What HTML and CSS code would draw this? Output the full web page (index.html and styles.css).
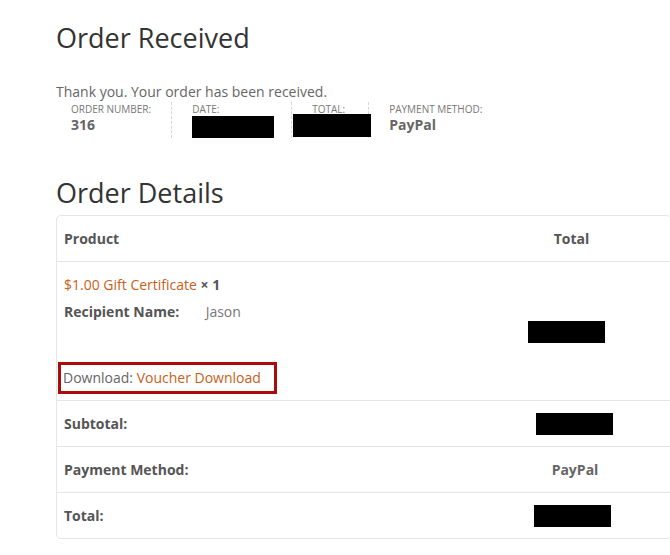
FILE: index.html
```html
<!DOCTYPE html>
<html lang="en">
<head>
    <meta charset="UTF-8">
    <meta name="viewport" content="width=device-width, initial-scale=1.0">
    <title>Order Received</title>
    <link rel="stylesheet" href="styles.css">
</head>
<body>
    <div class="page">
        <h1 class="page-title">Order Received</h1>
        <p class="thanks">Thank you. Your order has been received.</p>

        <ul class="order-overview">
            <li class="overview-item">
                <span class="overview-label">Order Number:</span>
                <strong class="overview-value">316</strong>
            </li>
            <li class="overview-item">
                <span class="overview-label">Date:</span>
                <strong class="redacted redacted-date"></strong>
            </li>
            <li class="overview-item">
                <span class="overview-label">Total:</span>
                <strong class="redacted redacted-total"></strong>
            </li>
            <li class="overview-item last">
                <span class="overview-label">Payment Method:</span>
                <strong class="overview-value">PayPal</strong>
            </li>
        </ul>

        <h2 class="section-title">Order Details</h2>

        <table class="order-table">
            <thead>
                <tr>
                    <th class="col-product">Product</th>
                    <th class="col-total">Total</th>
                </tr>
            </thead>
            <tbody>
                <tr>
                    <td class="col-product product-cell">
                        <div class="product-line">
                            <a href="#" class="link">$1.00 Gift Certificate</a> <strong class="qty">&times; 1</strong>
                        </div>
                        <div class="meta-line">
                            <span class="meta-label">Recipient Name:</span>
                            <span class="meta-value">Jason</span>
                        </div>
                        <div class="download-box">
                            Download: <a href="#" class="link">Voucher Download</a>
                        </div>
                    </td>
                    <td class="col-total">
                        <span class="redacted redacted-cell"></span>
                    </td>
                </tr>
            </tbody>
            <tfoot>
                <tr>
                    <th class="col-product">Subtotal:</th>
                    <td class="col-total"><span class="redacted redacted-cell subtotal"></span></td>
                </tr>
                <tr>
                    <th class="col-product">Payment Method:</th>
                    <td class="col-total"><strong class="total-text">PayPal</strong></td>
                </tr>
                <tr>
                    <th class="col-product">Total:</th>
                    <td class="col-total"><span class="redacted redacted-cell grand"></span></td>
                </tr>
            </tfoot>
        </table>
    </div>
</body>
</html>
```

FILE: styles.css
```css
body {
    font-family: "Open Sans", "Liberation Sans", sans-serif;
    margin: 0;
    padding: 0;
    background-color: #fff;
    color: #666;
    overflow: hidden;
}

.page {
    padding-left: 56px;
}

.page-title,
.section-title {
    font-size: 27px;
    font-weight: 400;
    line-height: 35px;
    color: #333;
    margin: 0;
}

.page-title {
    margin-top: 20px;
}

.thanks {
    font-size: 14px;
    line-height: 20px;
    margin: 27px 0 0;
}

.order-overview {
    list-style: none;
    margin: 0;
    padding: 0 0 0 15px;
    display: flex;
}

.overview-item {
    padding: 0 20px 0 0;
    margin-right: 20px;
    border-right: 1px dashed #d6d6d6;
    display: flex;
    flex-direction: column;
}

.overview-item.last {
    border-right: none;
}

.overview-label {
    font-size: 10px;
    line-height: 14px;
    text-transform: uppercase;
    color: #777;
}

.overview-value {
    font-size: 14px;
    line-height: 17px;
    font-weight: 700;
    color: #666;
}

.redacted {
    display: block;
    background-color: #000;
}

.redacted-date {
    width: 82px;
    height: 22px;
    margin: 0 -3px 0 0;
}

.redacted-total {
    width: 78px;
    height: 23px;
    margin: -2px -23px 0 -19px;
}

.section-title {
    margin-top: 37px;
}

.order-table {
    width: 616px;
    margin-top: 5px;
    border: 1px solid #e6e6e6;
    border-radius: 5px;
    border-collapse: separate;
    border-spacing: 0;
    font-size: 14px;
}

.order-table th,
.order-table td {
    padding: 12px 8px 12px 7px;
    line-height: 21px;
    text-align: left;
    vertical-align: middle;
    border-top: 1px solid #e6e6e6;
}

.order-table thead th {
    border-top: none;
}

.order-table th {
    font-weight: 700;
    color: #555;
}

.col-product {
    width: 400px;
}

.order-table .col-total {
    text-align: center;
    padding-left: 8px;
}

.product-cell {
    padding-top: 13px;
}

.link {
    color: #c8601a;
    text-decoration: none;
}

.qty {
    color: #555;
}

.meta-line {
    margin-top: 6px;
}

.meta-label {
    font-weight: 700;
    color: #555;
    display: inline-block;
    width: 138px;
}

.meta-value {
    color: #777;
}

.download-box {
    display: inline-block;
    margin: 40px 0 -8px -6px;
    padding: 2px 13px 3px 2px;
    border: 3px solid #ad0a0a;
}

.redacted-cell {
    display: inline-block;
    width: 77px;
    height: 22px;
    vertical-align: top;
    margin: 0 0 -1px -10px;
}

.redacted-cell.subtotal {
    margin-left: 6px;
}

.redacted-cell.grand {
    margin-left: 2px;
}

.total-text {
    color: #666;
    margin-left: 7px;
}
```
